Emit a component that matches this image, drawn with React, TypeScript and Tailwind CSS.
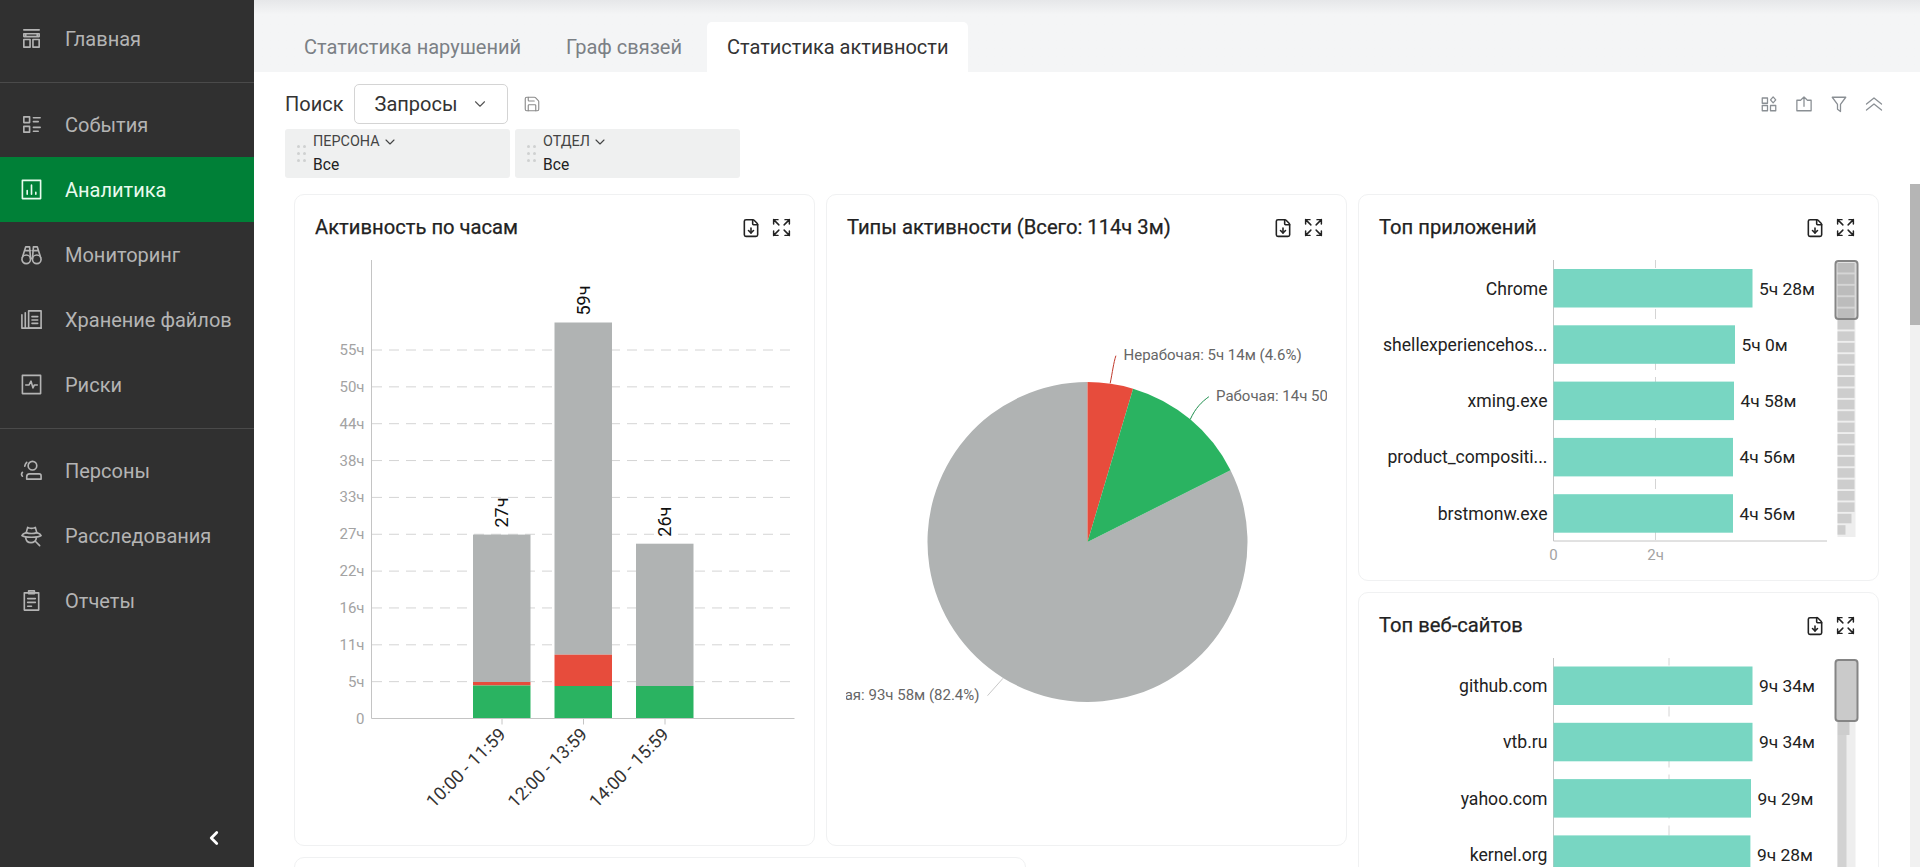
import React from "react"
import { ChevronDown, ChevronLeft, FileDown, Save } from "lucide-react"

type IconProps = { className?: string }

function Svg({ className, children }: IconProps & { children: React.ReactNode }) {
	return (
		<svg viewBox="0 0 24 24" fill="none" stroke="currentColor" strokeWidth="1.7" strokeLinecap="round" strokeLinejoin="round" className={className}>
			{children}
		</svg>
	)
}

const HomeIcon = (p: IconProps) => (
	<Svg {...p}>
		<path d="M4 3h16M4 7h16v3H4zM6 7v3M18 7v3" />
		<rect x="4" y="13" width="6.5" height="8" />
		<rect x="13.5" y="13" width="6.5" height="8" />
	</Svg>
)
const EventsIcon = (p: IconProps) => (
	<Svg {...p}>
		<rect x="4" y="4" width="6" height="6" />
		<rect x="4" y="14" width="6" height="6" />
		<path d="M14 5h7M14 9h5M14 15h7M14 19h5" />
	</Svg>
)
const AnalyticsIcon = (p: IconProps) => (
	<Svg {...p}>
		<rect x="2.5" y="2.5" width="19" height="19" />
		<path d="M7.5 17v-4M12 17V7.5M16.5 17v-2" />
	</Svg>
)
const BinocularsIcon = (p: IconProps) => (
	<Svg {...p}>
		<circle cx="6.5" cy="17" r="4.5" />
		<circle cx="17.5" cy="17" r="4.5" />
		<path d="M11 16h2M2.5 15 6 4h4l1 12M21.5 15 18 4h-4l-1 12M6 8h5M13 8h5" />
	</Svg>
)
const FilesIcon = (p: IconProps) => (
	<Svg {...p}>
		<rect x="9" y="3" width="13" height="18" />
		<path d="M12.5 9h6M12.5 12.5h6M12.5 16h6M5.5 5v16M2 7v14h20" />
	</Svg>
)
const RiskIcon = (p: IconProps) => (
	<Svg {...p}>
		<rect x="2.5" y="2.5" width="19" height="19" />
		<path d="M6 12.5h3.5l2-4 2 7 1.5-3h3" />
	</Svg>
)
const PersonIcon = (p: IconProps) => (
	<Svg {...p}>
		<circle cx="13" cy="7" r="4.5" />
		<path d="M7 21v-2.500a3 3 0 0 1 3-3h10a2 2 0 0 1 2 2V21z" />
		<path d="M7 3.500a7 7 0 0 0-2 4M2.500 14a3 3 0 0 0 0 4" />
	</Svg>
)
const DetectiveIcon = (p: IconProps) => (
	<Svg {...p}>
		<path d="M6.500 9 8 3.500c2 1 6 1 8 0L17.500 9" />
		<path d="M6.500 9C4 9.700 2.500 10.700 2 12c3 2.500 17 2.500 20 0-.500-1.300-2-2.300-4.500-3-3 1-8 1-11 0z" />
		<path d="M6 14.500c.300 3 2.700 5 5.500 5s5.500-2 5.500-5M16 18l4.500 4.500" />
	</Svg>
)
const ReportIcon = (p: IconProps) => (
	<Svg {...p}>
		<rect x="4.500" y="4" width="15" height="18" />
		<rect x="9" y="2" width="6" height="3" />
		<path d="M8 10h8M8 14h8M8 18h4" />
	</Svg>
)
const ExpandIcon = (p: IconProps) => (
	<Svg {...p}>
		<path d="M3 8V3h5M3 3l6 6M16 3h5v5M21 3l-6 6M3 16v5h5M3 21l6-6M21 16v5h-5M21 21l-6-6" />
	</Svg>
)
const WidgetsIcon = (p: IconProps) => (
	<Svg {...p}>
		<rect x="3" y="4" width="7" height="7" />
		<rect x="3" y="14" width="7" height="7" />
		<rect x="14" y="14" width="7" height="7" />
		<path d="m17.500 2.500 3.500 4-3.500 4-3.500-4z" />
	</Svg>
)
const ShareIcon = (p: IconProps) => (
	<Svg {...p}>
		<path d="M7.500 7H2.500v14h19V7h-5M12 15V3M8.500 6 12 2.500 15.500 6" />
	</Svg>
)
const FunnelIcon = (p: IconProps) => (
	<Svg {...p}>
		<path d="M3 3h18l-7 9.500V22l-4-3v-6.500z" />
	</Svg>
)
const DoubleUpIcon = (p: IconProps) => (
	<Svg {...p}>
		<path d="M2 12 12 4l10 8M2 20l10-8 10 8" />
	</Svg>
)

const nav = [
	{ label: "События", Icon: EventsIcon },
	{ label: "Аналитика", Icon: AnalyticsIcon, active: true },
	{ label: "Мониторинг", Icon: BinocularsIcon },
	{ label: "Хранение файлов", Icon: FilesIcon },
	{ label: "Риски", Icon: RiskIcon },
]
const nav2 = [
	{ label: "Персоны", Icon: PersonIcon },
	{ label: "Расследования", Icon: DetectiveIcon },
	{ label: "Отчеты", Icon: ReportIcon },
]

function NavItem({ label, Icon, active }: { label: string; Icon: (p: IconProps) => React.ReactNode; active?: boolean }) {
	return (
		<div className={`flex h-[65px] items-center gap-[22px] pl-[20px] text-[20px] ${active ? "bg-[#008037] text-[#e9fbee]" : "text-[#b4b4b4]"}`}>
			<Icon className="h-[23px] w-[23px] shrink-0" />
			<span>{label}</span>
		</div>
	)
}

function Sidebar() {
	return (
		<aside className="flex h-full w-[254px] shrink-0 flex-col bg-[#303030]">
			<div className="border-b border-[#4a4a4a] pb-[11px] pt-[6px]">
				<NavItem label="Главная" Icon={HomeIcon} />
			</div>
			<div className="border-b border-[#4a4a4a] pb-[11px] pt-[9px]">
				{nav.map((n) => (
					<NavItem key={n.label} {...n} />
				))}
			</div>
			<div className="pt-[9px]">
				{nav2.map((n) => (
					<NavItem key={n.label} {...n} />
				))}
			</div>
			<div className="mt-auto flex justify-end pb-[18px] pr-[29px] text-white">
				<ChevronLeft className="h-[22px] w-[22px]" strokeWidth={3} />
			</div>
		</aside>
	)
}

function Chip({ label }: { label: string }) {
	return (
		<div className="flex h-[49px] w-[225px] items-center gap-[7px] rounded-[3px] bg-[#eff0f0] pl-[12px]">
			<div className="grid grid-cols-2 gap-x-[3px] gap-y-[4px]">
				{[0, 1, 2, 3, 4, 5].map((i) => (
					<span key={i} className="h-[3px] w-[3px] rounded-full bg-[#cfd1d1]" />
				))}
			</div>
			<div>
				<div className="flex items-center gap-[2px] text-[14.4px] leading-[22px] text-[#444]">
					{label}
					<ChevronDown className="h-[16px] w-[16px]" strokeWidth={1.7} />
				</div>
				<div className="mt-[1px] text-[15.6px] leading-[23px] text-[#222] [font-weight:450]">Все</div>
			</div>
		</div>
	)
}

function Card({ title, className, children }: { title: string; className?: string; children: React.ReactNode }) {
	return (
		<section className={`overflow-hidden rounded-[10px] border border-[#f0f1f2] bg-white ${className ?? ""}`}>
			<header className="flex h-[65px] items-center justify-between pl-[20px] pr-[22px]">
				<h3 className="-mt-[1px] text-[20.2px] font-normal text-[#222] [-webkit-text-stroke:0.25px_#222]">{title}</h3>
				<div className="flex items-center gap-[10px] text-[#222]">
					<FileDown className="h-[20px] w-[20px]" strokeWidth={1.9} />
					<ExpandIcon className="h-[21px] w-[21px]" />
				</div>
			</header>
			{children}
		</section>
	)
}

const ticks = ["0", "5ч", "11ч", "16ч", "22ч", "27ч", "33ч", "38ч", "44ч", "50ч", "55ч"]
const columns = [
	{ x: 473, top: 534.6, redTop: 682, greenTop: 685.5, label: "27ч", time: "10:00 - 11:59" },
	{ x: 554.5, top: 322.5, redTop: 654.7, greenTop: 686, label: "59ч", time: "12:00 - 13:59" },
	{ x: 636, top: 543.7, redTop: 686, greenTop: 686, label: "26ч", time: "14:00 - 15:59" },
]

function HoursChart() {
	const base = 718.5
	return (
		<svg viewBox="295 260 519 586" width={519} height={586} className="block">
			{ticks.map((t, i) => {
				const y = base - 36.85 * i
				return (
					<g key={t}>
						{i > 0 && <line x1={372} x2={790} y1={y} y2={y} stroke="#d4d4d4" strokeDasharray="10 7" />}
						<text x={364.500} y={y + 5} textAnchor="end" fontSize="15" fill="#a3a3a3">
							{t}
						</text>
					</g>
				)
			})}
			<line x1={371.500} x2={371.500} y1={260} y2={base} stroke="#c4c4c4" />
			{columns.map((c) => (
				<g key={c.label}>
					<rect x={c.x} y={c.top} width={57.500} height={c.redTop - c.top} fill="#b0b3b3" />
					<rect x={c.x} y={c.redTop} width={57.500} height={c.greenTop - c.redTop} fill="#e74c3c" />
					<rect x={c.x} y={c.greenTop} width={57.500} height={base - c.greenTop} fill="#2ab361" />
					<text transform={`translate(${c.x + 35} ${c.top - 7}) rotate(-90)`} fontSize="18" fill="#111">
						{c.label}
					</text>
					<line x1={c.x + 29} x2={c.x + 29} y1={base} y2={base + 6} stroke="#c4c4c4" />
					<text transform={`translate(${c.x + 34} ${base + 17}) rotate(-45)`} textAnchor="end" fontSize="18" fill="#333">
						{c.time}
					</text>
				</g>
			))}
			<line x1={371.500} x2={794.500} y1={base} y2={base} stroke="#c4c4c4" />
		</svg>
	)
}

function slice(cx: number, cy: number, r: number, from: number, to: number) {
	const pt = (a: number) => {
		const rad = (a * Math.PI) / 180
		return `${cx + r * Math.sin(rad)} ${cy - r * Math.cos(rad)}`
	}
	return `M${cx} ${cy}L${pt(from)}A${r} ${r} 0 ${to - from > 180 ? 1 : 0} 1 ${pt(to)}Z`
}

function PieChart() {
	return (
		<div className="pl-[19px]">
			<svg viewBox="846.500 260 481 586" width={481} height={586} className="block">
				<path d={slice(1088, 542, 160, 63.36, 360)} fill="#b0b3b3" />
				<path d={slice(1088, 542, 160, 0, 16.56)} fill="#e74c3c" />
				<path d={slice(1088, 542, 160, 16.56, 63.36)} fill="#2ab361" />
				<path d="M1110.700 383.300C1113 372 1114 363 1116.400 355.700" fill="none" stroke="#c0392b" />
				<path d="M1190.800 419.300C1196 408 1202 402 1209.400 396.700" fill="none" stroke="#1f8f4e" />
				<path d="M1003.500 678.300L988 695.700" fill="none" stroke="#c8c8c8" />
				<text x={1124} y={360} fontSize="15" fill="#666">
					Нерабочая: 5ч 14м (4.6%)
				</text>
				<text x={1216.500} y={401} fontSize="15" fill="#666">
					Рабочая: 14ч 50м (13%)
				</text>
				<text x={980} y={700} textAnchor="end" fontSize="15" fill="#666">
					Нейтральная: 93ч 58м (82.4%)
				</text>
			</svg>
		</div>
	)
}

type Row = { name: string; value: string; end: number }

function TopChart({ rows, top, gridX, tick, height, step }: { rows: Row[]; top: number; gridX: number; tick?: boolean; height: number; step: number }) {
	const axisBottom = top + 283
	return (
		<>
			<line x1={gridX} x2={gridX} y1={top} y2={axisBottom} stroke="#d4d4d4" strokeDasharray="10 7" />
			<line x1={1553.500} x2={1553.500} y1={top} y2={axisBottom} stroke="#c4c4c4" />
			{rows.map((r, i) => {
				const y = top + 11 + step * i
				return (
					<g key={r.name}>
						<rect x={1553.500} y={y} width={r.end - 1553.500} height={height} fill="#78d6c2" />
						<text x={1547.500} y={y + 25.500} textAnchor="end" fontSize="17.600" fill="#222">
							{r.name}
						</text>
						<text x={r.end + 6.500} y={y + 25.500} fontSize="17.400" fill="#222">
							{r.value}
						</text>
					</g>
				)
			})}
			{tick && (
				<>
					<line x1={1553.500} x2={1827} y1={axisBottom} y2={axisBottom} stroke="#c4c4c4" />
					<text x={1553.500} y={axisBottom + 19} textAnchor="middle" fontSize="15" fill="#a3a3a3">
						0
					</text>
					<text x={gridX} y={axisBottom + 19} textAnchor="middle" fontSize="15" fill="#a3a3a3">
						2ч
					</text>
				</>
			)}
		</>
	)
}

const apps: Row[] = [
	{ name: "Chrome", value: "5ч 28м", end: 1752.500 },
	{ name: "shellexperiencehos...", value: "5ч 0м", end: 1735 },
	{ name: "xming.exe", value: "4ч 58м", end: 1734 },
	{ name: "product_compositi...", value: "4ч 56м", end: 1733 },
	{ name: "brstmonw.exe", value: "4ч 56м", end: 1733 },
]
const sites: Row[] = [
	{ name: "github.com", value: "9ч 34м", end: 1752.500 },
	{ name: "vtb.ru", value: "9ч 34м", end: 1752.500 },
	{ name: "yahoo.com", value: "9ч 29м", end: 1751 },
	{ name: "kernel.org", value: "9ч 28м", end: 1750.400 },
]

function AppsChart() {
	const stripes = Array.from({ length: 24 }, (_, i) => i)
	return (
		<svg viewBox="1359 260 519 320" width={519} height={320} className="block">
			<TopChart rows={apps} top={258} gridX={1655.500} tick height={38.500} step={56.300} />
			<rect x={1837.500} y={263} width={18} height={274} fill="#eeeeee" />
			{stripes.map((i) => (
				<rect key={i} x={1837.500} y={263 + i * 11.400} width={i === 23 ? 8 : i === 22 ? 14 : 17} height={9.500} fill="#cdcdcd" />
			))}
			<rect x={1835.500} y={261} width={22} height={58} rx={3} fill="#8a8a8a" fillOpacity={0.25} stroke="#858585" strokeWidth={2} />
		</svg>
	)
}

function SitesChart() {
	return (
		<svg viewBox="1359 657 519 210" width={519} height={210} className="block">
			<TopChart rows={sites} top={654.500} gridX={1669} height={38.500} step={56.300} />
			<rect x={1837.500} y={720} width={18} height={150} fill="#eeeeee" />
			<rect x={1837.500} y={720} width={12} height={14} fill="#cdcdcd" />
			<rect x={1837.500} y={734} width={9} height={136} fill="#d2d2d2" />
			<rect x={1835.500} y={659} width={22} height={61} rx={3} fill="#8a8a8a" fillOpacity={0.45} stroke="#858585" strokeWidth={2} />
		</svg>
	)
}

export default function App() {
	return (
		<div className="flex h-[867px] w-full overflow-hidden bg-white font-[Roboto,sans-serif]">
			<Sidebar />
			<main className="flex min-w-0 flex-1 flex-col">
				<nav className="flex h-[72px] shrink-0 items-end gap-[3px] bg-gradient-to-b from-[#e6e7e9] via-[#f4f5f6] via-[20%] to-[#f4f5f6] pl-[30px] text-[20px] text-[#7b8085]">
					<div className="flex h-[50px] items-center px-[20px]">Статистика нарушений</div>
					<div className="flex h-[50px] items-center px-[22px]">Граф связей</div>
					<div className="flex h-[50px] items-center rounded-t-[5px] bg-white px-[20px] text-[#333]">Статистика активности</div>
				</nav>
				<div className="h-[112px] shrink-0 pl-[31px] pt-[12px]">
					<div className="flex h-[40px] items-center pr-[37px]">
						<span className="text-[20px] text-[#333]">Поиск</span>
						<div className="ml-[10px] flex h-[40px] w-[154px] items-center gap-[14px] rounded-[5px] border border-[#d4d4d4] pl-[20px] text-[20px] text-[#333]">
							Запросы
							<ChevronDown className="h-[18px] w-[18px] text-[#555]" strokeWidth={1.500} />
						</div>
						<Save className="ml-[15px] h-[18px] w-[18px] text-[#8a8a8a]" strokeWidth={1.500} />
						<div className="ml-auto flex items-center gap-[17px] text-[#8a8f94]">
							<WidgetsIcon className="h-[18px] w-[18px]" />
							<ShareIcon className="h-[18px] w-[18px]" />
							<FunnelIcon className="h-[18px] w-[18px]" />
							<DoubleUpIcon className="h-[18px] w-[18px]" />
						</div>
					</div>
					<div className="mt-[5px] flex gap-[5px]">
						<Chip label="ПЕРСОНА" />
						<Chip label="ОТДЕЛ" />
					</div>
				</div>
				<div className="relative min-h-0 flex-1 overflow-hidden pl-[40px] pr-[41px] pt-[10px]">
					<div className="grid grid-cols-3 grid-rows-[652px_100px] gap-[11px]">
						<Card title="Активность по часам">
							<HoursChart />
						</Card>
						<Card title="Типы активности (Всего: 114ч 3м)">
							<PieChart />
						</Card>
						<div className="row-span-2 flex h-[763px] flex-col gap-[11px]">
							<Card title="Топ приложений" className="h-[387px] shrink-0">
								<AppsChart />
							</Card>
							<Card title="Топ веб-сайтов" className="h-[400px] shrink-0">
								<SitesChart />
							</Card>
						</div>
						<div className="col-span-2 w-[732px] rounded-[10px] border border-[#f0f1f2] bg-white" />
					</div>
					<div className="absolute bottom-0 right-0 top-0 w-[10px] bg-[#f1f1f1]">
						<div className="h-[141px] bg-[#b5b5b5]" />
					</div>
				</div>
			</main>
		</div>
	)
}
